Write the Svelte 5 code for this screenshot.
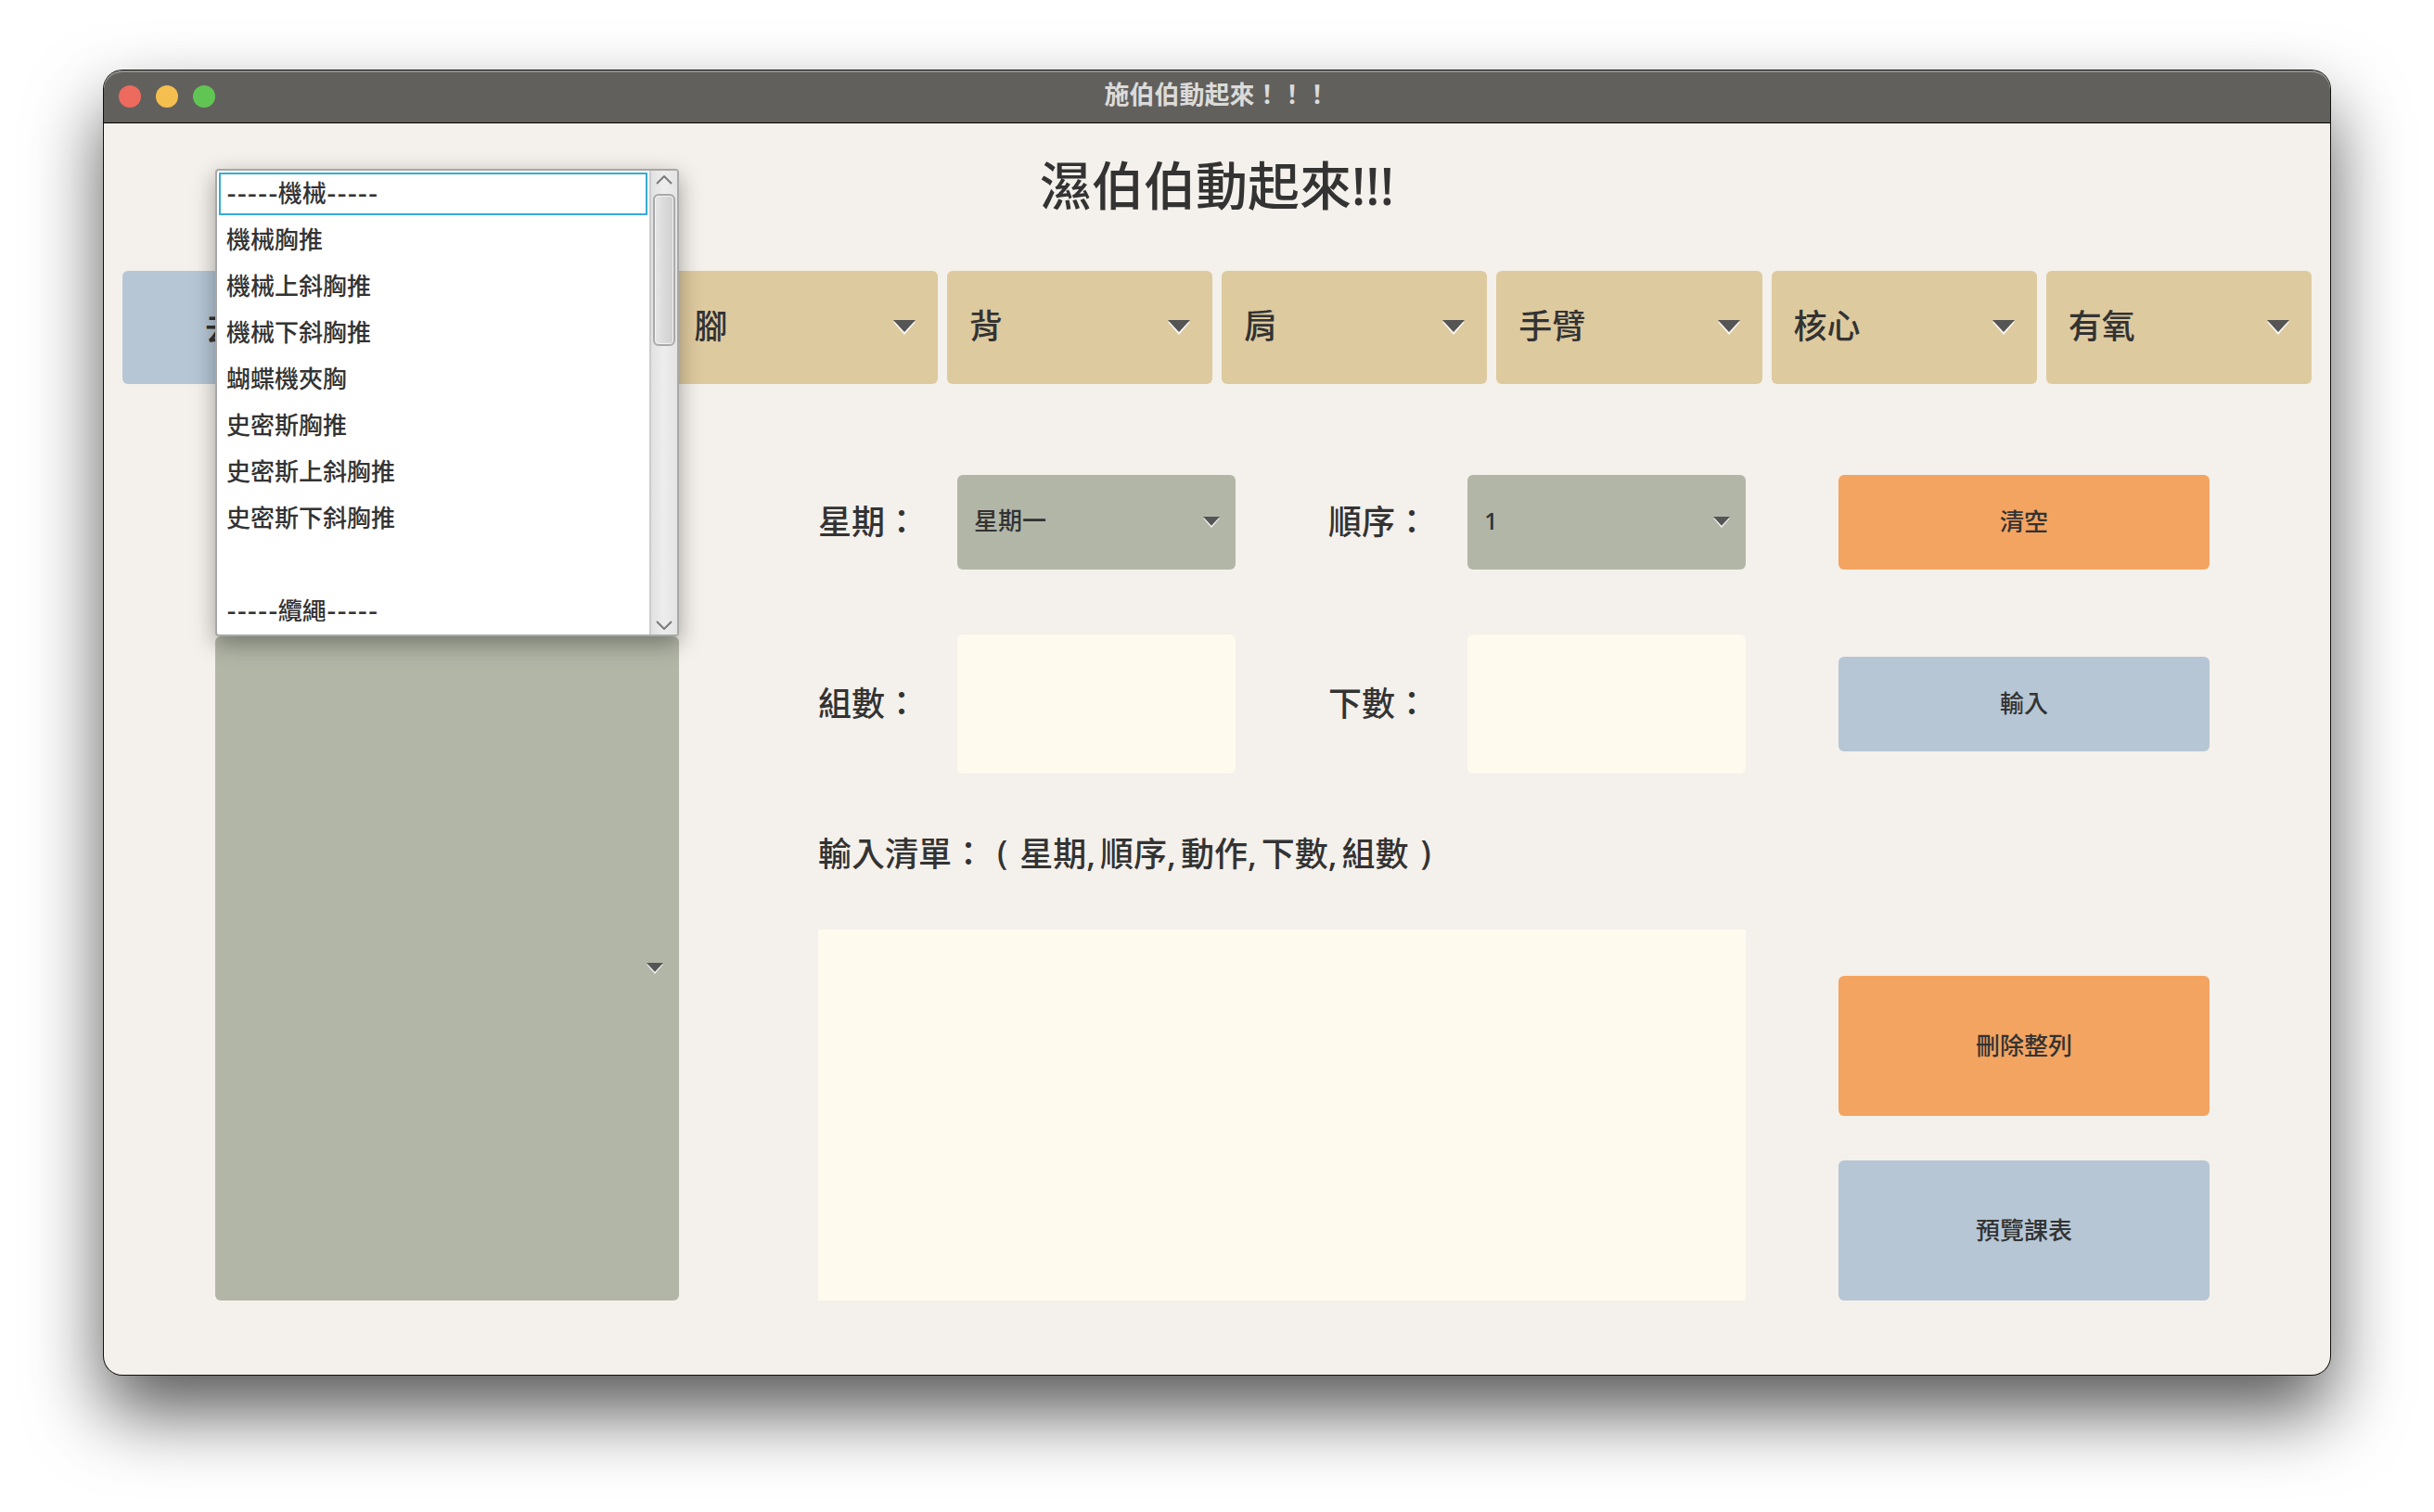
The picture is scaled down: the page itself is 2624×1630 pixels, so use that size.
<script>
  const categories = ['胸', '腳', '背', '肩', '手臂', '核心', '有氧'];

  const exercises = [
    { text: '機械', heading: true },
    { text: '機械胸推' },
    { text: '機械上斜胸推' },
    { text: '機械下斜胸推' },
    { text: '蝴蝶機夾胸' },
    { text: '史密斯胸推' },
    { text: '史密斯上斜胸推' },
    { text: '史密斯下斜胸推' },
    { text: '' },
    { text: '纜繩', heading: true },
  ];

  const fields = ['星期', '順序', '動作', '下數', '組數'];
  const weekdays = ['星期一', '星期二', '星期三', '星期四', '星期五', '星期六', '星期日'];
  const orders = ['1', '2', '3', '4', '5', '6', '7', '8'];

  let weekday = $state('星期一');
  let order = $state('1');
  let selected = $state(0);
</script>

{#snippet caret(size)}
  <svg class="caret {size}" viewBox="0 0 24 16" aria-hidden="true">
    <path d="M0 2h24L12 16z" fill="#fff" fill-opacity=".85" />
    <path d="M0 0h24L12 13z" fill="#555" />
  </svg>
{/snippet}

<div class="desktop">
  <div class="window">
    <header class="titlebar">
      <div class="lights">
        <button class="light close" aria-label="關閉"></button>
        <button class="light minimize" aria-label="縮小"></button>
        <button class="light zoom" aria-label="放大"></button>
      </div>
      <div class="title">施伯伯動起來！！！</div>
    </header>

    <main>
      <h1>濕伯伯動起來!!!</h1>

      <nav class="categories">
        <button class="blue start">去課表</button>
        {#each categories as name}
          <div class="combo tan">
            <select aria-label={name}>
              <option>{name}</option>
            </select>
            {@render caret('large')}
          </div>
        {/each}
      </nav>

      <div class="form">
        <div class="picker">
          <div class="combo sage">
            <select aria-label="動作"></select>
            {@render caret('small')}
          </div>
          <div class="popup">
            <ul role="listbox" aria-label="動作清單">
              {#each exercises as item, i}
                <li role="option" aria-selected={i === selected} class:selected={i === selected}>
                  {#if item.heading}<span class="dash">-----</span>{item.text}<span class="dash">-----</span>{:else}{item.text}{/if}
                </li>
              {/each}
            </ul>
            <div class="scrollbar">
              <svg viewBox="0 0 18 10" aria-hidden="true"><path d="M1 9l8-8 8 8" /></svg>
              <div class="track"><div class="thumb"></div></div>
              <svg viewBox="0 0 18 10" aria-hidden="true"><path d="M1 1l8 8 8-8" /></svg>
            </div>
          </div>
        </div>

        <label class="l1 r1" for="weekday">星期：</label>
        <div class="combo sage f1 r1">
          <select id="weekday" bind:value={weekday}>
            {#each weekdays as d}<option>{d}</option>{/each}
          </select>
          {@render caret('small')}
        </div>
        <label class="l2 r1" for="order">順序：</label>
        <div class="combo sage f2 r1">
          <select id="order" bind:value={order}>
            {#each orders as o}<option>{o}</option>{/each}
          </select>
          {@render caret('small')}
        </div>
        <button class="orange act r1">清空</button>

        <label class="l1 r2" for="sets">組數：</label>
        <input id="sets" class="f1 r2" type="text" />
        <label class="l2 r2" for="reps">下數：</label>
        <input id="reps" class="f2 r2" type="text" />
        <button class="blue act r2">輸入</button>

        <label class="caption" for="entries">
          <span>輸入清單：</span>
          <span class="paren">(</span>
          {#each fields as f, i}<span class="field">{f}{i < fields.length - 1 ? ',' : ''}</span>{/each}
          <span class="paren">)</span>
        </label>
        <textarea id="entries"></textarea>

        <div class="tall">
          <button class="orange">刪除整列</button>
          <button class="blue">預覽課表</button>
        </div>
      </div>
    </main>
  </div>
</div>

<style>
  :global(body) {
    margin: 0;
    background: #fff;
  }

  .desktop {
    padding: 76px 112px 148px;
  }

  .window,
  button,
  select,
  input,
  textarea {
    font-family: 'Noto Sans', 'Noto Sans CJK TC', sans-serif;
    font-weight: 500;
    color: #333;
  }

  .window {
    border-radius: 20px;
    background: #f4f0eb;
    font-size: 26px;
    box-shadow:
      0 0 0 1px #111,
      0 40px 80px rgba(0, 0, 0, 0.66);
  }

  .titlebar {
    display: grid;
    grid-template-columns: 1fr auto 1fr;
    align-items: center;
    height: 57px;
    padding: 0 16px;
    box-sizing: border-box;
    border-bottom: 1px solid #000;
    border-radius: 20px 20px 0 0;
    background: #61605d;
    box-shadow: inset 0 2px 0 #8b8c87;
  }

  .lights {
    display: flex;
    gap: 16px;
  }

  .light {
    width: 24px;
    height: 24px;
    border-radius: 50%;
  }

  .close {
    background: #ed6a5e;
  }

  .minimize {
    background: #f5bf4f;
  }

  .zoom {
    background: #61c554;
  }

  .title {
    padding-bottom: 4px;
    color: #dcdbda;
    font-size: 27px;
    line-height: 52px;
    font-weight: 600;
  }

  h1 {
    margin: 0;
    padding: 24px 0 51px;
    font-size: 56px;
    line-height: 84px;
    font-weight: 500;
    text-align: center;
  }

  button {
    border: 0;
    padding: 0 0 4px;
    border-radius: 6px;
    font-size: 26px;
  }

  .blue {
    background: #b6c6d5;
  }

  .orange {
    background: #f4a461;
  }

  .tan {
    background: #deca9f;
  }

  .sage {
    background: #b2b6a7;
  }

  .categories {
    display: grid;
    grid-template-columns: repeat(8, 1fr);
    gap: 10px;
    padding: 0 20px;
    height: 122px;
  }

  .start {
    font-size: 36px;
  }

  .combo {
    display: grid;
    align-items: center;
    border-radius: 6px;
  }

  .combo select {
    grid-area: 1 / 1;
    width: 100%;
    height: 100%;
    appearance: none;
    border: 0;
    padding: 0 18px 4px;
    background: transparent;
    font-size: 26px;
  }

  .combo.tan select {
    padding: 0 24px 4px;
    font-size: 36px;
  }

  .caret {
    grid-area: 1 / 1;
    justify-self: end;
    pointer-events: none;
  }

  .large {
    width: 24px;
    height: 16px;
    margin-right: 24px;
  }

  .small {
    width: 18px;
    height: 12px;
    margin-right: 17px;
  }

  .form {
    display: grid;
    grid-template-columns: 500fr 150fr 150fr 300fr 100fr 150fr 300fr 100fr 400fr;
    grid-template-rows: 102px 70px 150px 168px 400px;
    padding: 98px 130px 80px 120px;
  }

  .form label {
    padding-bottom: 6px;
    font-size: 36px;
    align-self: center;
    white-space: nowrap;
  }

  .r1 {
    grid-row: 1;
  }

  .r2 {
    grid-row: 3;
  }

  .l1 {
    grid-column: 3;
  }

  .f1 {
    grid-column: 4;
  }

  .l2 {
    grid-column: 6;
  }

  .f2 {
    grid-column: 7;
  }

  .act {
    grid-column: 9;
    height: 102px;
    align-self: center;
  }

  input,
  textarea {
    box-sizing: border-box;
    border: 0;
    padding: 16px;
    min-width: 0;
    background: #fefaee;
    font-size: 26px;
    outline: 0;
    resize: none;
  }

  input {
    border-radius: 6px;
  }

  .form .caption {
    grid-area: 4 / 3 / 5 / 8;
    display: flex;
    align-items: center;
    gap: 5px;
    padding-bottom: 0;
  }

  .paren {
    padding: 0 8px;
  }

  textarea {
    grid-area: 5 / 3 / 6 / 8;
  }

  .tall {
    grid-area: 5 / 9;
    display: flex;
    flex-direction: column;
    justify-content: flex-end;
    gap: 48px;
  }

  .tall button {
    height: 151px;
  }

  .picker {
    grid-area: 3 / 1 / 6 / 2;
    position: relative;
    display: grid;
    margin-top: 2px;
  }

  /* The open list hangs over the top edge of its combo box. */
  .popup {
    position: absolute;
    z-index: 1;
    left: 0;
    right: 0;
    bottom: 100%;
    display: flex;
    border: 2px solid #a8a8a8;
    border-radius: 4px;
    background: #fff;
    box-shadow: 0 8px 24px rgba(0, 0, 0, 0.35);
  }

  .popup ul {
    flex: 1;
    display: flex;
    flex-direction: column;
    gap: 4px;
    margin: 0;
    padding: 2px;
    list-style: none;
  }

  .popup li {
    display: flex;
    align-items: center;
    height: 46px;
    padding: 0 6px 2px;
    box-sizing: border-box;
    border: 2px solid transparent;
    line-height: 40px;
  }

  .popup .selected {
    border-color: #36abd7;
  }

  .dash {
    font-family: Lato, sans-serif;
    font-size: 30px;
  }

  .scrollbar {
    display: flex;
    flex-direction: column;
    align-items: center;
    width: 28px;
    border-left: 2px solid #cbcbcb;
    background: linear-gradient(90deg, #e2e2e2, #ededed 50%, #e4e4e4);
  }

  .scrollbar svg {
    width: 18px;
    height: 10px;
    margin: 5px 0;
    fill: none;
    stroke: #7a7a7a;
    stroke-width: 2;
  }

  .track {
    flex: 1;
    padding-top: 5px;
  }

  .thumb {
    width: 20px;
    height: 160px;
    border: 2px solid #a9a9a9;
    border-radius: 6px;
    background: linear-gradient(90deg, #e6e6e6, #cfcfcf);
    box-shadow: inset 0 0 0 1px #f2f2f2;
  }
</style>
